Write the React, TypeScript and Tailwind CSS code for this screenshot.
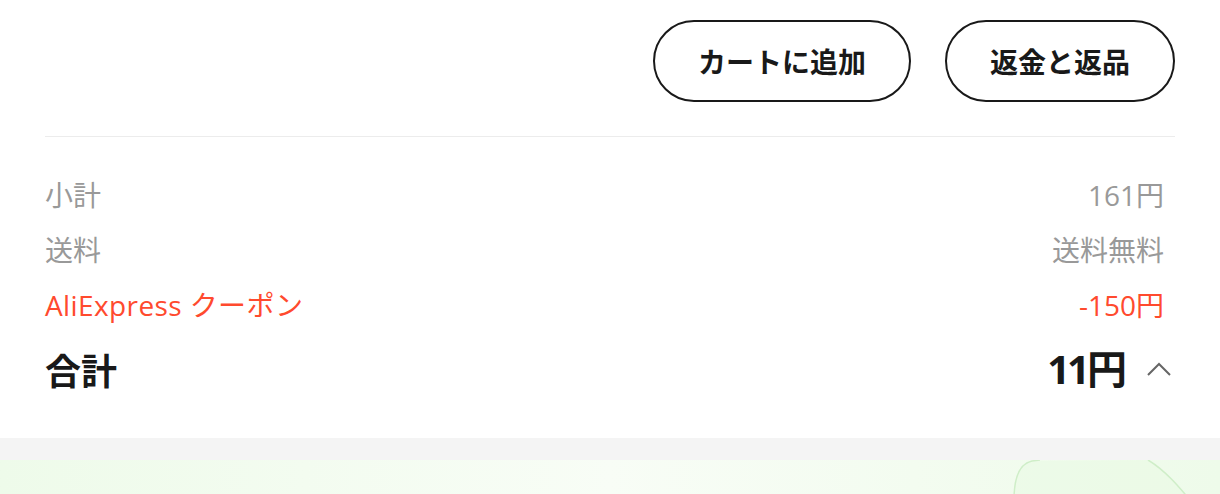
import React from 'react';

export default function App() {
  const grayRows = [
    { label: '小計', value: '161円' },
    { label: '送料', value: '送料無料' },
  ];

  return (
    <div className="w-[1220px] h-[494px] overflow-hidden bg-white" style={{ fontFamily: '"Open Sans", "Noto Sans CJK JP", sans-serif' }}>
      {/* Actions + summary */}
      <section className="pl-[45px] pr-[45px] pt-[20px]">
        <div className="flex justify-end gap-[34px]">
          <button className="h-[82px] px-[43px] rounded-full border-[2.5px] border-[#191919] text-[28px] font-bold text-[#191919] leading-none" style={{ fontFamily: '"Noto Sans CJK JP", sans-serif' }}>
            カートに追加
          </button>
          <button className="h-[82px] px-[43px] rounded-full border-[2.5px] border-[#191919] text-[28px] font-bold text-[#191919] leading-none" style={{ fontFamily: '"Noto Sans CJK JP", sans-serif' }}>
            返金と返品
          </button>
        </div>

        <div className="mt-[34px] h-px bg-[#ececec]" />

        <div className="pt-[30px]">
          {grayRows.map((row) => (
            <div key={row.label} className="h-[55px] flex items-center justify-between pr-[11px] text-[28px] text-[#999999]">
              <span>{row.label}</span>
              <span>{row.value}</span>
            </div>
          ))}
          <div className="h-[55px] flex items-center justify-between pr-[11px] text-[28px] text-[#ff4a2e]">
            <span className="tracking-[0.4px]">AliExpress クーポン</span>
            <span>-150円</span>
          </div>

          <div className="h-[74px] flex items-center justify-between text-[#191919]">
            <span className="text-[36px] font-bold" style={{ fontFamily: '"Noto Sans CJK JP", sans-serif' }}>合計</span>
            <div className="flex items-center gap-[20px] pr-[4px]">
              <span className="text-[40px] font-bold tracking-[-3px] pr-[3px]">11円</span>
              <svg width="24" height="14" viewBox="0 0 24 14" fill="none" stroke="#666" strokeWidth="2">
                <path d="M1 13 L12 2 L23 13" />
              </svg>
            </div>
          </div>
        </div>
      </section>

      <div className="mt-[32px] h-[22px] bg-[#f4f4f4]" />

      {/* Promo area */}
      <div className="relative h-[40px] bg-gradient-to-r from-[#eefbea] via-[#f8fdf6] to-[#eefbea]">
        <svg className="absolute left-[1000px] top-0" width="220" height="40" viewBox="0 0 220 40" fill="none">
          <path d="M14 40 C14 20 18 4 32 1 L148 0 C165 10 180 28 190 40 Z" fill="#e9fae4" opacity="0.6" />
          <path d="M14 40 C14 20 18 4 32 1 L40 0" stroke="#cfeec8" strokeWidth="1.5" />
          <path d="M148 0 C165 10 180 28 190 40" stroke="#cfeec8" strokeWidth="1.5" />
        </svg>
      </div>
    </div>
  );
}
